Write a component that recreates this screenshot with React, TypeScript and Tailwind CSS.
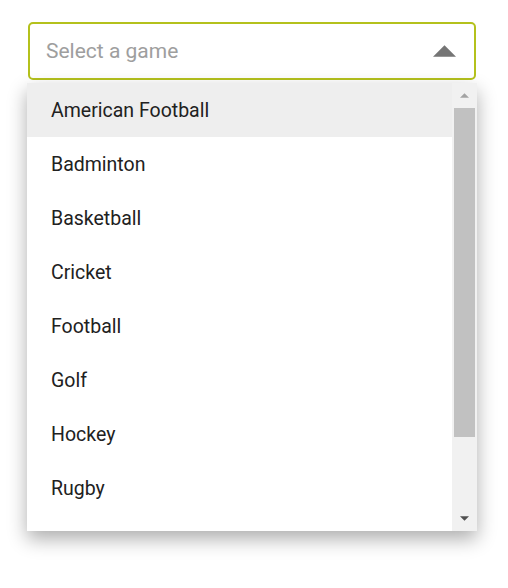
import { useState } from 'react';

const games = [
  'American Football',
  'Badminton',
  'Basketball',
  'Cricket',
  'Football',
  'Golf',
  'Hockey',
  'Rugby',
];

function Triangle({ dir, className }: { dir: 'up' | 'down'; className?: string }) {
  return (
    <svg viewBox="0 0 10 5" className={className} aria-hidden>
      {dir === 'up' ? <path d="M0 5 L5 0 L10 5 Z" /> : <path d="M0 0 L10 0 L5 5 Z" />}
    </svg>
  );
}

export default function App() {
  const [active] = useState(0);

  return (
    <div className="min-h-[588px] w-[508px] bg-white font-['Roboto',sans-serif]">
      <div className="pl-[28px] pr-[32px] pt-[22px]">
        <div className="h-[58px] rounded-[5px] border-2 border-[#b4c11c] flex items-center justify-between pl-[16px] pr-[18px]">
          <span className="text-[21px] text-[#9e9e9e] translate-y-[1px]">Select a game</span>
          <Triangle dir="up" className="w-[23px] h-[12px] fill-[#757575]" />
        </div>
      </div>

      <div className="ml-[27px] mt-[3px] w-[450px] h-[448px] bg-white flex shadow-[0_8px_18px_rgba(0,0,0,0.32)]">
        <ul className="flex-1 overflow-hidden">
          {games.map((g, i) => (
            <li
              key={g}
              className={`h-[54px] flex items-center pl-[24px] pt-[2px] text-[19.5px] text-[#212121] ${
                i === active ? 'bg-[#eeeeee]' : 'bg-white'
              }`}
            >
              {g}
            </li>
          ))}
        </ul>
        <div className="w-[25px] bg-[#f1f1f1] flex flex-col items-center">
          <div className="h-[25px] flex items-center justify-center">
            <Triangle dir="up" className="w-[9px] h-[5px] fill-[#a3a3a3]" />
          </div>
          <div className="w-[21px] h-[329px] bg-[#c1c1c1]" />
          <div className="flex-1" />
          <div className="h-[25px] flex items-center justify-center">
            <Triangle dir="down" className="w-[9px] h-[5px] fill-[#505050]" />
          </div>
        </div>
      </div>
    </div>
  );
}
